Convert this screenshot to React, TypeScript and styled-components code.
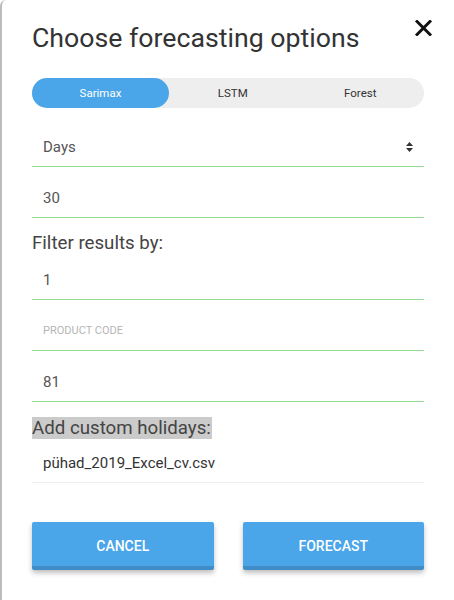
import React from "react";
import styled, { createGlobalStyle } from "styled-components";

const GlobalStyle = createGlobalStyle`
  html, body {
    margin: 0;
    padding: 0;
    background: #fff;
    font-family: Roboto, "Liberation Sans", Arial, sans-serif;
  }
`;

const Modal = styled.div`
  box-sizing: border-box;
  width: 454px;
  height: 600px;
  border-left: 2px solid #bdbdbd;
  border-top-left-radius: 6px;
  padding: 0 30px;
  overflow: hidden;
`;

const Header = styled.div`
  display: flex;
  justify-content: space-between;
  align-items: flex-start;
  height: 78px;
`;

const Title = styled.h2`
  margin: 21px 0 0 0;
  font-size: 26.7px;
  font-weight: 400;
  color: #333;
  line-height: 34px;
`;

const CloseButton = styled.button`
  border: none;
  background: none;
  padding: 0;
  margin: 20px -8px 0 0;
  width: 17px;
  height: 16px;
  cursor: pointer;
`;

const Tabs = styled.div`
  display: grid;
  grid-template-columns: 137px 1fr 1fr;
  height: 30px;
  border-radius: 15px;
  background: #eeeeee;
  margin-bottom: 8px;
`;

const Tab = styled.div<{ $active?: boolean }>`
  display: flex;
  align-items: center;
  justify-content: center;
  border-radius: 15px;
  font-size: 11.5px;
  color: ${(p) => (p.$active ? "#fff" : "#333")};
  background: ${(p) => (p.$active ? "#4aa5e9" : "transparent")};
`;

const Field = styled.div<{ $muted?: boolean; $h?: number }>`
  box-sizing: border-box;
  display: flex;
  align-items: flex-end;
  justify-content: space-between;
  height: ${(p) => p.$h ?? 51}px;
  padding: 0 11px 10px 11px;
  line-height: 18px;
  border-bottom: 1px solid ${(p) => (p.$muted ? "#eeeeee" : "#92dc92")};
  font-size: 15px;
  color: ${(p) => (p.$muted ? "#333" : "#555")};
`;

const Placeholder = styled.span`
  font-size: 11px;
  color: #b5b5b5;
`;

const IconSlot = styled.span`
  display: flex;
  align-items: center;
  height: 18px;
`;

const Heading = styled.div<{ $top: number }>`
  margin-top: ${(p) => p.$top}px;
  font-size: 18.7px;
  color: #444;
  line-height: 23px;
`;

const Highlight = styled.span`
  background: #cbcbcb;
  padding-right: 1px;
`;

const Buttons = styled.div`
  display: grid;
  grid-template-columns: 1fr 1fr;
  gap: 29px;
  margin-top: 39px;
`;

const Button = styled.button`
  box-sizing: border-box;
  height: 48px;
  border: none;
  border-bottom: 4px solid #3f8cc6;
  border-radius: 2px;
  background: #4aa5e9;
  color: #fff;
  font-family: Roboto, "Liberation Sans", Arial, sans-serif;
  font-size: 14px;
  font-weight: 500;
  box-shadow: 0 3px 5px rgba(0, 0, 0, 0.25);
  padding-top: 4px;
`;

const SortIcon = () => (
  <svg width="7" height="10" viewBox="0 0 7 10">
    <path d="M3.5 0 L7 4 H0 Z M3.5 10 L7 6 H0 Z" fill="#333" />
  </svg>
);

const CloseIcon = () => (
  <svg width="17" height="16" viewBox="0 0 17 16">
    <path d="M2 1.5 L15 14.5 M15 1.5 L2 14.5" stroke="#111" strokeWidth="3" strokeLinecap="square" />
  </svg>
);

export default function App() {
  return (
    <>
      <GlobalStyle />
      <Modal>
        <Header>
          <Title>Choose forecasting options</Title>
          <CloseButton aria-label="close">
            <CloseIcon />
          </CloseButton>
        </Header>
        <Tabs>
          <Tab $active>Sarimax</Tab>
          <Tab>LSTM</Tab>
          <Tab>Forest</Tab>
        </Tabs>
        <Field>
          <span>Days</span>
          <IconSlot>
            <SortIcon />
          </IconSlot>
        </Field>
        <Field>30</Field>
        <Heading $top={14}>Filter results by:</Heading>
        <Field $h={45}>1</Field>
        <Field>
          <Placeholder>PRODUCT CODE</Placeholder>
        </Field>
        <Field>81</Field>
        <Heading $top={15}>
          <Highlight>Add custom holidays:</Highlight>
        </Heading>
        <Field $muted $h={43}>
          pühad_2019_Excel_cv.csv
        </Field>
        <Buttons>
          <Button>CANCEL</Button>
          <Button>FORECAST</Button>
        </Buttons>
      </Modal>
    </>
  );
}
